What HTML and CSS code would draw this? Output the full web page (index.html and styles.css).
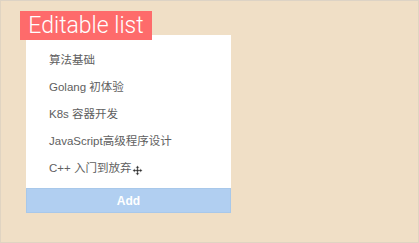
FILE: index.html
```html
<!DOCTYPE html>
<html>
<head>
<meta charset="utf-8">
<link rel="stylesheet" href="styles.css">
</head>
<body>
<div class="page">
  <div class="panel">
    <h1 class="title">Editable list</h1>
    <div class="card">
      <ul class="list">
        <li class="item">算法基础</li>
        <li class="item">Golang 初体验</li>
        <li class="item">K8s 容器开发</li>
        <li class="item">JavaScript高级程序设计</li>
        <li class="item">C++ 入门到放弃<span class="move"><svg width="11" height="11" viewBox="0 0 11 11"><path d="M5.5 0.5 L7.5 3 H6.3 V4.7 H8 V3.5 L10.5 5.5 L8 7.5 V6.3 H6.3 V8 H7.5 L5.5 10.5 L3.5 8 H4.7 V6.3 H3 V7.5 L0.5 5.5 L3 3.5 V4.7 H4.7 V3 H3.5 Z" fill="#333" stroke="#fff" stroke-width="0.6"/></svg></span></li>
      </ul>
      <button class="add">Add</button>
    </div>
  </div>
</div>
</body>
</html>
```

FILE: styles.css
```css
html, body {
  margin: 0;
  padding: 0;
}
body {
  width: 419px;
  height: 243px;
  background: #f0dfc6;
  font-family: "Noto Sans", "Noto Sans CJK SC", sans-serif;
  overflow: hidden;
}
.page {
  box-sizing: border-box;
  width: 419px;
  height: 243px;
  border: 1px solid #e0d4c2;
  border-top-color: #ddd3c5;
}
.panel {
  display: flex;
  flex-direction: column;
  align-items: flex-start;
  padding: 10px 0 0 19px;
}
.title {
  position: relative;
  z-index: 1;
  margin: 0 0 -5px 0;
  width: 132px;
  height: 29px;
  box-sizing: border-box;
  background: #fe6b6b;
  color: #fff;
  font-family: Roboto, sans-serif;
  font-weight: 300;
  font-size: 23px;
  line-height: 30px;
  text-align: center;
}
.card {
  margin-left: 6px;
  width: 205px;
  background: #fff;
  display: flex;
  flex-direction: column;
}
.list {
  list-style: none;
  margin: 0;
  padding: 12px 0 6px 23px;
}
.item {
  height: 27px;
  line-height: 27px;
  font-size: 11.5px;
  color: #606060;
  display: flex;
  align-items: center;
  font-family: "Liberation Sans", "Noto Sans CJK SC", sans-serif;
}
.move {
  display: inline-flex;
  margin-left: 1px;
  margin-top: 4px;
}
.add {
  height: 25px;
  border: 1px solid #a8c8ea;
  background: #b1cff1;
  color: #fff;
  font-family: "Liberation Sans", sans-serif;
  font-size: 12px;
  font-weight: bold;
  padding: 0;
  margin: 0;
}
```
